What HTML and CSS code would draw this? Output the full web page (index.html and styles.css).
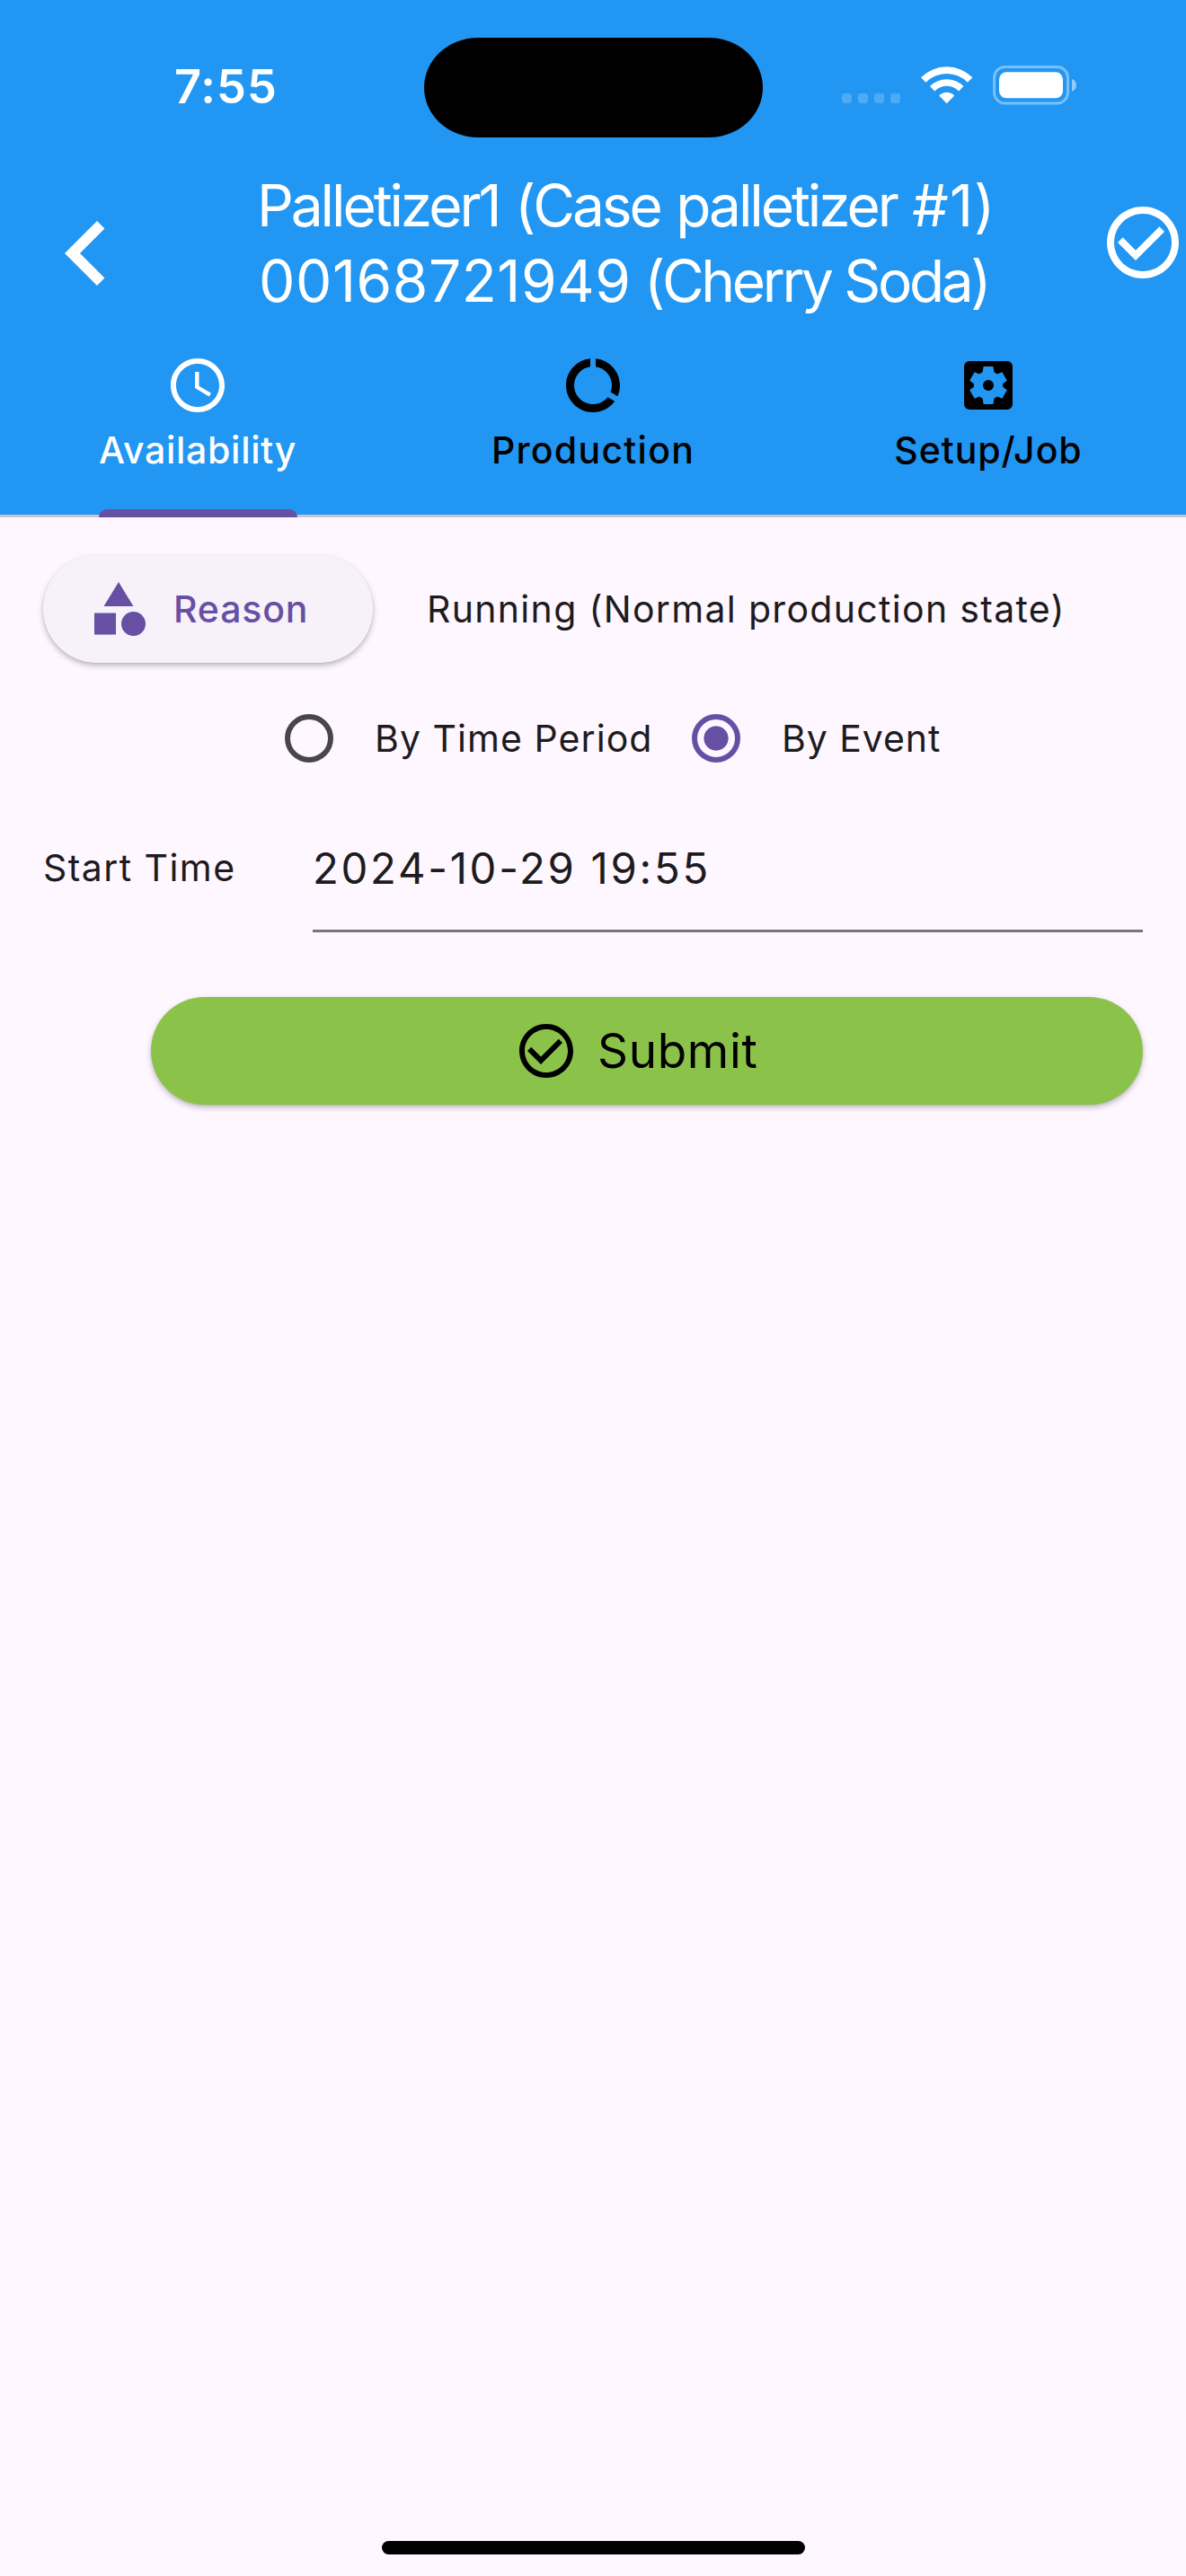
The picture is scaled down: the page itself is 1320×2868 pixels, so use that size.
FILE: index.html
```html
<!DOCTYPE html>
<html lang="en">
<head>
<meta charset="utf-8">
<title>Palletizer1 – Availability</title>
<link rel="stylesheet" href="styles.css">
</head>
<body>
<div class="screen">
  <header class="header">
    <div class="status-bar">
      <div class="clock">7:55</div>
      <div class="island"></div>
      <div class="status-icons">
        <div class="cellular"><i></i><i></i><i></i><i></i></div>
        <svg class="wifi" viewBox="0 0 58 43" fill="#fff"><path d="M0 13.2A40.5 40.5 0 0 1 57.4 13.2L51.9 18.7A32.5 32.5 0 0 0 5.5 18.7Z"/><path d="M10 23A26.5 26.5 0 0 1 47.4 23L42.1 28.4A18.8 18.8 0 0 0 15.3 28.4Z"/><path d="M20.2 33.4A12 12 0 0 1 37.2 33.4L28.7 42.2Z"/></svg>
        <svg class="battery" viewBox="0 0 94 44"><rect x="1.5" y="1.5" width="82" height="40.5" rx="12" fill="none" stroke="#fff" stroke-opacity=".4" stroke-width="3"/><rect x="7" y="7.3" width="71" height="29" rx="8" fill="#fff"/><path d="M88 15c3 1 5 3.700 5 6.900s-2 5.900-5 6.900z" fill="#fff" fill-opacity=".5"/></svg>
      </div>
    </div>
    <div class="toolbar">
      <svg class="back" viewBox="0 0 24 24" fill="#fff"><path d="M15.410 7.410L14 6l-6 6 6 6 1.410-1.410L10.830 12z"/></svg>
      <h1 class="title"><span class="title-machine">Palletizer1 (Case palletizer <span class="machine-number">#1)</span></span><span class="title-job"><span class="job-number">00168721949</span> (Cherry Soda)</span></h1>
      <svg class="confirm" viewBox="0 0 24 24" fill="#fff"><path d="M16.590 7.580L10 14.170l-3.590-3.580L5 12l5 5 8-8zM12 2C6.480 2 2 6.480 2 12s4.480 10 10 10 10-4.480 10-10S17.520 2 12 2zm0 18c-4.420 0-8-3.580-8-8s3.580-8 8-8 8 3.580 8 8-3.580 8-8 8z"/></svg>
    </div>
    <nav class="tabs">
      <div class="tab tab-active">
        <svg class="icon" viewBox="0 0 24 24" fill="currentColor"><path d="M11.990 2C6.470 2 2 6.480 2 12s4.470 10 9.990 10C17.520 22 22 17.520 22 12S17.520 2 11.990 2zM12 20c-4.420 0-8-3.580-8-8s3.580-8 8-8 8 3.580 8 8-3.580 8-8 8zm.5-13H11v6l5.250 3.150.750-1.230-4.500-2.670z"/></svg>
        <span class="tab-label availability">Availability</span>
        <div class="indicator"></div>
      </div>
      <div class="tab">
        <svg class="icon" viewBox="0 0 24 24" fill="currentColor"><path d="M13 2.050v3.030c3.390.490 6 3.390 6 6.920 0 .9-.180 1.750-.480 2.540l2.600 1.530c.560-1.240.880-2.620.880-4.070 0-5.180-3.950-9.450-9-9.950zM12 19c-3.870 0-7-3.130-7-7 0-3.530 2.610-6.430 6-6.920V2.050c-5.060.5-9 4.760-9 9.950 0 5.520 4.470 10 9.990 10 3.310 0 6.240-1.610 8.060-4.090l-2.600-1.530C16.170 17.980 14.210 19 12 19z"/></svg>
        <span class="tab-label production">Production</span>
      </div>
      <div class="tab">
        <svg class="icon" viewBox="0 0 24 24" fill="currentColor"><path fill-rule="evenodd" d="M5 3h14a2 2 0 0 1 2 2v14a2 2 0 0 1-2 2H5a2 2 0 0 1-2-2V5a2 2 0 0 1 2-2zM10.200 5h3.600l.35 2.200c.4.160.8.380 1.150.650l1.800-.75 1.850 3.150-1.600 1.200q.12.550 0 1.100l1.600 1.200-1.850 3.150-1.800-.75c-.35.270-.75.490-1.150.650L13.800 19h-3.600l-.35-2.200c-.4-.160-.8-.380-1.150-.650l-1.800.75-1.850-3.150 1.600-1.200q-.12-.550 0-1.100l-1.600-1.200L6.900 7.100l1.800.75c.35-.270.75-.490 1.150-.650z"/><circle cx="12" cy="12" r="2"/></svg>
        <span class="tab-label setup">Setup/Job</span>
      </div>
    </nav>
  </header>
  <main class="content">
    <div class="reason-row">
      <button class="reason-button">
        <svg class="icon" viewBox="0 0 24 24" fill="currentColor"><path d="M12 2l-5.500 9h11zM3 13.500h8v8H3z"/><circle cx="17.500" cy="17.500" r="4.500"/></svg>
        <span>Reason</span>
      </button>
      <span class="reason-text">Running (Normal production state)</span>
    </div>
    <div class="mode-row">
      <span class="radio"></span>
      <span class="mode-label period">By Time Period</span>
      <span class="radio radio-on"></span>
      <span class="mode-label event">By Event</span>
    </div>
    <div class="time-row">
      <span class="time-label">Start Time</span>
      <div class="time-field">2024-10-29 19:55</div>
    </div>
    <button class="submit">
      <svg class="icon" viewBox="0 0 24 24" fill="currentColor"><path d="M16.590 7.580L10 14.170l-3.590-3.580L5 12l5 5 8-8zM12 2C6.480 2 2 6.480 2 12s4.480 10 10 10 10-4.480 10-10S17.520 2 12 2zm0 18c-4.420 0-8-3.580-8-8s3.580-8 8-8 8 3.580 8 8-3.580 8-8 8z"/></svg>
      <span>Submit</span>
    </button>
  </main>
  <div class="home-bar"></div>
</div>
</body>
</html>
```

FILE: styles.css
```css
* { box-sizing: border-box; }

body {
  margin: 0;
  background: #fef7ff;
  color: #1d1b20;
  font-family: Inter, Roboto, "Liberation Sans", sans-serif;
}

button {
  margin: 0;
  border: 0;
  font-family: inherit;
}

svg { display: block; flex: none; }

span { white-space: nowrap; }

.screen {
  display: flex;
  flex-direction: column;
  width: 1320px;
  height: 2868px;
}

.icon { width: 72px; height: 72px; }

/* Header */
.header {
  height: 576px;
  background: #2196f3;
  color: #fff;
}

.status-bar {
  display: grid;
  grid-template-columns: 471.5px 377px 1fr;
  height: 177px;
}

.clock {
  padding: 64px 0 0 194px;
  font-size: 52.3px;
  line-height: 64px;
  font-weight: 600;
  letter-spacing: 1px;
}

.island {
  height: 111px;
  margin-top: 41.5px;
  border-radius: 60px / 55.5px;
  background: #000;
}

.status-icons {
  display: flex;
  align-items: flex-start;
  padding: 72.7px 0 0 88.5px;
}

.cellular {
  display: flex;
  gap: 7px;
  margin: 31.3px 23px 0 0;
}

.cellular i {
  width: 11px;
  height: 11px;
  border-radius: 3px;
  background: rgba(255, 255, 255, .2);
}

.wifi { width: 58px; height: 43px; margin-right: 22px; }
.battery { width: 94px; height: 44px; }

.toolbar {
  display: flex;
  height: 183px;
}

.back { width: 144px; height: 144px; margin: 33px 0 0 24px; }
.confirm { width: 96px; height: 96px; margin-top: 45px; }

.title {
  display: flex;
  flex: 1;
  flex-direction: column;
  align-items: flex-start;
  margin: 10px 0 0;
  padding-left: 118px;
  font-size: 64px;
  line-height: 84px;
  font-weight: 400;
}

.title-machine { letter-spacing: -3.1px; word-spacing: 2.8px; }
.machine-number { letter-spacing: 1px; }
.title-job { padding-left: 2px; letter-spacing: -3.4px; }
.job-number { letter-spacing: .58px; }

.tabs {
  display: grid;
  grid-template-columns: repeat(3, 440px);
  height: 216px;
  border-bottom: 3px solid #cac4d0;
}

.tab {
  display: flex;
  flex-direction: column;
  align-items: center;
  height: 216px;
  padding-top: 33px;
  color: #000;
}

.tab-active { color: #fff; }

.tab-label {
  margin-top: 6px;
  font-size: 41px;
  line-height: 60px;
  font-weight: 500;
}

.availability { letter-spacing: .72px; }
.production { letter-spacing: 1.27px; }
.setup { letter-spacing: .94px; }

.indicator {
  width: 221px;
  height: 9px;
  margin-top: auto;
  border-radius: 9px 9px 0 0;
  background: #6750a4;
}

/* Form */
.content {
  display: flex;
  flex: 1;
  flex-direction: column;
  padding: 42px 48px 0;
  font-size: 41px;
}

.reason-row {
  display: flex;
  align-items: center;
  height: 120px;
}

.reason-button {
  display: flex;
  align-items: center;
  gap: 25px;
  width: 366.5px;
  height: 120px;
  padding: 0 0 0 48px;
  border-radius: 60px;
  background: #f7f2fa;
  box-shadow: 0 3px 6px rgba(0, 0, 0, .26), 0 1px 2px rgba(0, 0, 0, .06);
  color: #6750a4;
  font-size: 41px;
  font-weight: 500;
  letter-spacing: .84px;
}

.reason-text {
  margin-left: 60.5px;
  letter-spacing: 1.318px;
}

.mode-row {
  display: flex;
  align-items: center;
  height: 144px;
  margin-top: 12px;
  padding-left: 269px;
}

.radio {
  width: 54px;
  height: 54px;
  border: 6px solid #49454f;
  border-radius: 50%;
}

.radio-on {
  border-color: #6750a4;
  background: radial-gradient(circle, #6750a4 13.2px, transparent 14px);
}

.mode-label { margin-left: 46px; }
.period { width: 353px; letter-spacing: 1.054px; }
.event { letter-spacing: .941px; }

.time-row {
  display: flex;
  align-items: flex-start;
  height: 144px;
}

.time-label {
  width: 300px;
  padding-top: 42px;
  line-height: 60px;
  letter-spacing: 1.436px;
}

.time-field {
  flex: 1;
  height: 144px;
  padding-top: 43px;
  border-bottom: 3px solid #79747e;
  font-size: 47.3px;
  line-height: 60px;
  letter-spacing: 2.71px;
}

.submit {
  display: flex;
  align-items: center;
  justify-content: center;
  gap: 21px;
  height: 120px;
  margin: 72px 0 0 120px;
  padding: 0 24.5px 0 0;
  border-radius: 60px;
  background: #8bc34a;
  box-shadow: 0 3px 6px rgba(0, 0, 0, .26), 0 1px 2px rgba(0, 0, 0, .06);
  color: #000;
  font-size: 53px;
  letter-spacing: .67px;
}

.home-bar {
  align-self: center;
  width: 471px;
  height: 15px;
  margin-bottom: 24px;
  border-radius: 8px;
  background: #000;
}
```
